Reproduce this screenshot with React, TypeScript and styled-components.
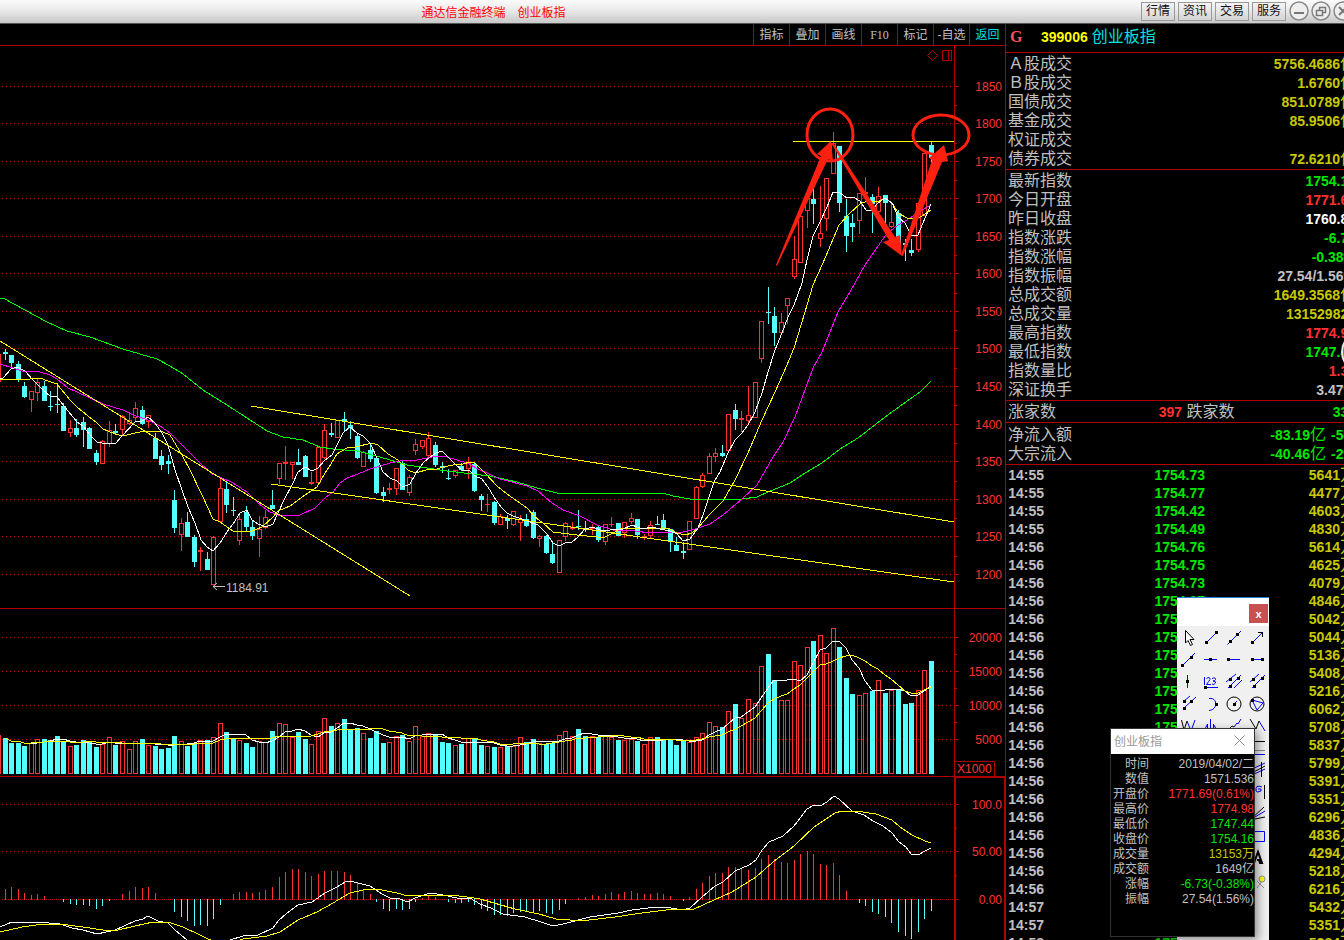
import React from "react";
import styled, { createGlobalStyle } from "styled-components";

const GlobalStyle = createGlobalStyle`
  * { box-sizing: border-box; }
  body {
    margin: 0;
    background: #000;
    overflow: hidden;
    font-family: "Liberation Sans", "Noto Sans CJK SC", sans-serif;
  }
  button { font-family: inherit; padding: 0; margin: 0; }
`;

const UP = "#ff3232";
const DOWN = "#54ffff";
const LINE = "#b00000";
const GREY = "#c0c0c0";
const GREEN = "#00e600";
const GOLD = "#c8c800";
const BLUE = "#0000ff";

/* ---------- shell ---------- */

const Page = styled.div`
  position: relative;
  display: flex;
  flex-direction: column;
  height: 100vh;
  overflow: hidden;
  background: #000;
`;

const TitleBar = styled.header`
  display: flex;
  flex: none;
  align-items: center;
  height: 24px;
  padding-bottom: 1px;
  background: linear-gradient(#fafafa, #ececec 40%, #c8c8c8);
  border-bottom: 1px solid #555;
  overflow: hidden;
`;

const AppTitle = styled.h1`
  flex: 1;
  margin: 0;
  display: flex;
  justify-content: center;
  gap: 12px;
  padding-right: 154px;
  font-size: 12px;
  font-weight: 400;
  color: #ff0000;
`;

const TitleButtons = styled.div`
  display: flex;
  flex: none;
  align-items: center;
  gap: 3px;
  margin-right: -8px;
`;

const TitleButton = styled.button`
  width: 34px;
  height: 19px;
  border: 1px solid #999;
  background: linear-gradient(#f4f4f4, #d4d4d4);
  color: #111;
  font-size: 12px;
  line-height: 16px;
`;

const RoundButton = styled.button`
  display: block;
  width: 19px;
  height: 20px;
  border: 0;
  background: none;
  svg { display: block; }
`;

const Main = styled.main`
  display: flex;
  flex: 1;
  min-height: 0;
`;

const ChartArea = styled.section`
  flex: 1;
  min-width: 0;
`;

const ChartTools = styled.nav`
  display: flex;
  justify-content: flex-end;
  height: 22px;
  border-bottom: 1px solid ${LINE};
`;

const ChartTool = styled.button<{ $active?: boolean; $serif?: boolean }>`
  width: 36px;
  border: 0;
  border-left: 1px solid ${LINE};
  background: none;
  color: ${(p) => (p.$active ? "#00e0e0" : GREY)};
  ${(p) => p.$serif && 'font-family: "Liberation Serif", serif;'}
  font-size: 12px;
  line-height: 20px;
  white-space: nowrap;
`;

const Panel = styled.svg`
  display: block;
  width: 100%;
  height: auto;
`;

/* ---------- chart data: wick top, wick bottom, body top, body bottom, rising ---------- */

type Candle = [number, number, number, number, 0 | 1];

const candles: Candle[] = [
  [349,360,352,354,0],[355,367,355,363,0],[361,382,364,379,0],[382,398,386,397,0],[391,412,391,400,1],
  [379,401,382,393,1],[381,401,386,401,0],[391,411,406,407,0],[383,413,404,405,0],[403,431,406,431,0],
  [420,437,428,433,1],[419,437,428,435,0],[417,447,422,430,0],[427,449,428,449,0],[450,465,453,462,0],
  [440,464,441,464,1],[421,447,430,444,1],[424,434,431,433,0],[415,436,416,430,1],[412,425,420,424,1],
  [402,421,408,418,1],[406,425,410,424,0],[415,428,415,422,1],[433,459,438,459,0],[450,470,456,465,0],
  [455,474,461,464,0],[490,533,500,528,0],[518,551,523,535,1],[512,537,522,537,0],[535,567,537,562,0],
  [547,571,550,552,1],[552,570,559,570,0],[536,585,537,585,1],[478,522,488,522,1],[482,513,489,505,0],
  [497,516,510,511,0],[515,545,519,541,1],[506,532,512,527,0],[520,540,527,536,0],[516,557,529,539,1],
  [510,529,517,528,1],[490,509,505,509,0],[463,484,463,479,1],[446,480,462,464,1],[462,479,462,465,1],
  [449,465,462,465,0],[455,477,456,477,0],[472,485,482,484,1],[447,484,447,483,1],[424,459,430,458,1],
  [423,437,433,435,0],[420,438,420,438,1],[412,432,419,421,0],[421,439,425,428,0],[434,459,436,458,0],
  [451,467,452,467,1],[443,462,450,459,0],[456,494,458,493,0],[487,502,492,496,0],[483,494,488,490,1],
  [468,495,468,489,1],[461,490,463,490,0],[475,496,477,493,1],[439,455,444,451,1],[440,449,440,447,1],
  [432,457,438,456,1],[442,467,445,465,0],[462,473,466,468,0],[469,480,478,479,0],[470,478,470,476,1],
  [463,471,466,470,0],[457,479,463,469,1],[463,492,464,491,0],[494,511,496,500,0],[494,512,504,505,1],
  [501,525,502,523,0],[514,525,516,525,1],[515,529,518,521,0],[511,526,511,525,1],[515,541,519,523,1],
  [514,527,519,526,0],[510,539,512,538,0],[535,547,536,539,1],[535,554,536,553,0],[542,564,554,563,0],
  [540,573,540,573,1],[522,541,523,537,1],[522,530,527,529,1],[510,530,526,527,0],[521,532,528,530,0],
  [524,535,527,529,1],[525,542,527,540,0],[524,545,524,542,1],[517,527,524,525,1],[523,536,523,536,0],
  [522,538,522,533,1],[513,524,518,522,1],[519,539,519,535,0],[534,540,536,537,1],[521,538,525,536,1],
  [516,525,524,525,0],[514,530,520,529,0],[529,552,529,542,0],[537,551,545,551,0],[542,559,551,553,0],
  [521,550,521,550,1],[486,519,487,519,1],[473,488,475,487,1],[453,474,456,474,1],[448,462,453,457,1],
  [445,457,453,456,0],[414,451,414,451,1],[404,430,410,419,0],[411,432,418,420,1],[386,424,415,421,1],
  [382,418,382,418,1],[321,363,321,359,1],[287,324,312,313,0],[307,346,316,333,0],[313,333,322,333,1],
  [298,324,298,306,1],[236,279,259,277,1],[216,263,216,263,1],[190,228,198,211,1],[185,224,199,204,0],
  [186,247,233,239,1],[178,231,178,219,1],[132,174,143,174,1],[146,212,146,203,0],[199,252,216,236,0],
  [214,242,223,227,0],[193,234,193,221,1],[177,196,192,194,1],[194,233,197,204,0],[187,216,196,212,1],
  [195,228,195,203,0],[203,228,222,227,1],[210,245,213,245,0],[239,261,243,245,0],[239,256,250,253,0],
  [203,252,203,250,1],[153,216,153,216,1],[142,163,145,158,0],
];

/* Volume bar tops and MACD bar ends, in thirds of a pixel below y = 600. */
const volumeTops = [
  414,429,429,438,429,417,417,420,408,426,438,435,420,426,441,432,411,435,423,447,423,417,435,438,447,444,408,423,
  438,432,420,420,411,369,396,417,420,429,441,423,426,393,369,372,411,396,417,432,393,354,378,369,357,387,384,399,
  414,393,429,426,408,405,423,378,408,399,405,426,429,435,432,414,414,435,438,441,441,438,438,411,426,417,429,432,
  429,405,393,408,387,408,408,411,408,411,420,420,417,423,432,411,411,417,417,435,423,426,411,399,366,378,381,333,
  312,354,297,309,198,162,240,300,300,183,195,141,123,105,159,84,141,234,282,285,279,273,240,279,270,270,312,309,
  270,210,183,
];

const macd = [
  867,861,867,879,885,882,888,898,896,906,912,915,915,918,927,918,903,896,882,873,861,864,861,879,896,898,936,951,
  963,978,975,978,957,915,898,882,876,876,879,876,870,861,831,816,807,807,816,828,822,813,813,813,816,825,849,867,
  882,906,927,933,927,930,927,906,894,885,891,898,906,909,909,906,915,927,933,945,945,948,939,936,936,936,933,939,
  942,930,912,898,894,891,885,888,882,876,882,876,873,879,882,882,879,882,888,898,903,891,867,849,828,819,819,801,
  801,804,810,804,777,765,777,786,789,780,762,753,762,792,795,789,825,873,898,909,918,936,942,951,969,996,1008,
  1017,996,957,933,
];

const barX = (i: number) => Math.floor(5.12 + 6.521 * i);

const volumeAverage = (span: number) =>
  volumeTops
    .map((_, i) => {
      const part = volumeTops.slice(Math.max(0, i - span + 1), i + 1);
      const mean = part.reduce((a, b) => a + b, 0) / part.length;
      return `${barX(i)},${Math.round(600 + mean / 3)}`;
    })
    .join(" ");

const ma5 =
  "0,379 3,378 11,369 17,367 25,371 33,380 43,390 50,396 57,397 64,406 77,422 83,426 90,435 97,442 102,443 116,443 122,436 135,422 142,421 148,417 155,423 162,433 168,445 175,470 182,490 188,507 195,523 201,540 207,547 213,551 220,543 227,532 233,524 240,513 247,510 252,520 258,524 266,527 273,524 278,513 285,498 292,485 298,472 305,467 312,471 318,468 325,460 332,455 338,443 343,433 350,427 357,433 363,436 370,443 377,458 383,472 390,478 397,481 403,487 410,484 416,473 423,463 430,457 436,453 442,451 449,458 456,465 462,470 469,470 475,476 482,479 488,487 494,497 501,507 507,513 513,516 527,521 538,525 547,534 553,543 559,546 565,543 572,542 578,537 585,529 593,527 600,530 610,530 623,529 632,525 642,529 652,527 660,529 670,531 677,534 683,541 690,539 698,528 703,515 708,500 714,482 720,472 728,453 735,440 742,433 748,425 755,412 762,393 768,372 775,350 782,333 788,317 794,305 802,283 807,260 813,236 820,222 827,207 833,192 839,192 847,198 853,197 860,201 866,210 871,211 878,203 885,198 892,203 898,217 905,223 911,235 918,235 923,223 931,204";
const ma10 =
  "0,379 30,379 40,378 48,381 57,384 70,400 77,407 88,416 97,423 103,429 115,434 123,436 135,433 145,431 163,432 170,435 182,455 190,470 202,495 213,519 220,522 233,531 252,531 262,527 273,517 278,511 290,506 305,495 317,487 325,473 331,464 337,454 347,448 355,447 372,443 378,445 388,454 398,460 408,470 415,473 430,469 437,469 443,467 453,465 463,464 470,462 475,463 485,473 497,486 507,494 517,501 527,508 535,517 543,523 553,532 577,535 597,537 605,537 613,533 620,529 663,528 670,529 677,533 685,535 692,533 698,528 710,514 723,501 735,480 748,453 762,420 775,392 787,365 794,348 802,322 813,285 823,263 839,225 850,213 860,204 867,201 877,202 885,198 893,204 898,213 907,218 915,219 922,216 931,210";
const ma20 =
  "0,364 13,368 22,371 40,372 50,375 57,379 68,388 88,397 103,404 123,410 133,415 148,420 160,426 170,433 187,450 200,463 212,474 220,477 233,483 247,492 258,503 270,512 278,515 300,515 315,508 325,498 333,492 340,483 347,478 358,474 370,469 390,463 400,461 417,460 437,456 447,457 467,463 480,470 500,479 527,486 538,491 552,503 563,510 580,516 597,525 613,530 635,531 650,533 670,532 683,532 695,529 710,524 723,515 742,499 757,485 773,457 783,442 795,417 813,368 822,352 838,312 850,292 865,265 885,236 895,227 910,218 920,211 931,205";
const ma60 =
  "0,298 3,298 25,310 47,322 67,331 90,337 123,349 157,359 170,366 183,374 203,390 227,405 247,418 267,431 283,437 303,440 320,447 333,449 357,451 380,457 407,465 447,471 490,476 517,482 537,488 557,493 580,493 613,493 663,493 673,496 690,499 742,499 757,497 768,492 790,483 802,475 822,463 840,449 858,438 885,417 903,404 920,392 927,385 931,381";
const dif =
  "0,927 12,922 25,923 38,922 60,924 72,928 83,930 97,934 115,930 135,921 143,919 148,916 158,921 168,923 175,930 187,940 205,948 220,945 230,940 243,936 258,935 273,928 278,921 287,913 298,905 312,902 325,893 337,887 345,882 350,881 370,886 382,894 390,898 397,898 408,902 415,898 430,893 443,895 457,898 470,898 480,904 491,908 503,914 525,917 541,922 553,926 563,924 590,917 618,913 632,910 656,907 671,908 682,910 690,908 701,898 715,886 723,882 735,871 749,865 756,860 762,850 769,842 783,836 794,826 807,809 814,805 820,806 827,802 834,796 839,799 852,811 864,815 873,821 883,826 892,833 899,842 906,847 911,854 918,855 925,851 931,848";
const dea =
  "0,932 22,927 43,924 60,924 83,927 103,930 118,930 135,926 153,922 168,922 183,927 200,935 208,939 225,945 243,939 267,936 280,932 298,920 317,912 333,903 350,893 363,890 377,889 397,893 408,896 430,895 450,895 467,897 480,899 494,903 515,909 539,914 556,919 570,920 589,920 615,917 642,913 666,910 694,909 714,900 732,892 756,877 773,862 794,846 814,827 835,813 842,811 856,811 876,814 892,820 900,827 912,835 925,841 931,843";

const Curve = ({ points, color }: { points: string; color: string }) => (
  <polyline points={points} fill="none" stroke={color} strokeWidth={1} shapeRendering="crispEdges" />
);

const Bar = ({ x, top, bottom, rising }: { x: number; top: number; bottom: number; rising: boolean }) =>
  rising && bottom - top > 2 ? (
    <rect x={x - 1.5} y={top + 0.5} width={4} height={bottom - top - 1} fill="none" stroke={UP} />
  ) : (
    <rect x={x - 2} y={top} width={5} height={bottom - top} fill={rising ? UP : DOWN} />
  );

const GridRow = ({ y, label, dense }: { y: number; label: string; dense?: boolean }) => (
  <g>
    <line x1={2} x2={954} y1={y + 0.5} y2={y + 0.5} stroke={LINE} strokeDasharray={dense ? "1 1" : "1 3"} />
    <rect x={954} y={y} width={5} height={1} fill={LINE} />
    <text x={1002} y={y + 5} textAnchor="end" fontSize={12} fill={UP}>
      {label}
    </text>
  </g>
);

const MinorTick = ({ y }: { y: number }) => <rect x={954} y={y} width={3} height={1} fill={LINE} />;

const PricePanel = () => (
  <Panel viewBox="0 46 1005 562" role="img" aria-label="创业板指 K线">
    <g shapeRendering="crispEdges">
      {Array.from({ length: 14 }, (_, k) => (
        <GridRow key={k} y={Math.floor(86 + 37.56 * k)} label={String(1850 - 50 * k)} />
      ))}
      {Array.from({ length: 13 }, (_, k) => (
        <MinorTick key={k} y={Math.round(105 + 37.56 * k)} />
      ))}
      <rect x={954} y={46} width={1} height={562} fill={LINE} />
      <rect x={-2} y={354} width={3} height={28} fill={UP} />
      {candles.map(([high, low, top, bottom, rising], i) => (
        <g key={i}>
          <rect x={barX(i)} y={high} width={1} height={top - high} fill={rising ? UP : DOWN} />
          <rect x={barX(i)} y={bottom} width={1} height={low - bottom} fill={rising ? UP : DOWN} />
          <Bar x={barX(i)} top={top} bottom={bottom} rising={rising === 1} />
        </g>
      ))}
    </g>
    <Curve points={ma60} color="#00ff00" />
    <Curve points={ma20} color="#ff00ff" />
    <Curve points={ma10} color="#ffff00" />
    <Curve points={ma5} color="#ffffff" />
    <Curve points="0,341 410,596" color="#ffff00" />
    <Curve points="251,406 954,522" color="#ffff00" />
    <Curve points="271,484 954,582" color="#ffff00" />
    <rect x={793} y={141} width={161} height={1} fill="#ffff00" />
    <path d="M225 586.5H213M217 583L213 586.5L217 590" fill="none" stroke={GREY} />
    <text x={226} y={592} fontSize={12} fill={GREY}>
      1184.91
    </text>
    <path d="M932.5 50.5L937.5 55.5L932.5 60.5L927.5 55.5Z" fill="none" stroke={LINE} />
    <path d="M942.5 50.5H951.5V60.5H942.5ZM948.5 50.5V60.5" fill="none" stroke={LINE} />
    <g fill="#ff2010">
      <path d="M776 265L821 156L817 154L831 141L833 161L828 159L777 266Z" />
      <path d="M831 143L834 144L895 237L900 235L902 256L883 242L889 240Z" />
      <path d="M901 255L932 160L929 158L944 145L948 161L942 162L903 256Z" />
    </g>
    <g fill="none" stroke="#ff2010" strokeWidth={3}>
      <ellipse cx={830} cy={135} rx={23} ry={26} />
      <ellipse cx={941} cy={135} rx={28} ry={20} />
    </g>
  </Panel>
);

const VolumePanel = () => (
  <Panel viewBox="0 608 1005 168" role="img" aria-label="成交量">
    <g shapeRendering="crispEdges">
      <rect x={0} y={608} width={1005} height={1} fill={LINE} />
      {[20000, 15000, 10000, 5000].map((v, k) => (
        <GridRow key={v} y={637 + 34 * k} label={String(v)} />
      ))}
      {[654, 688, 722].map((y) => (
        <MinorTick key={y} y={y} />
      ))}
      <rect x={954} y={608} width={1} height={168} fill={LINE} />
      <rect x={0} y={735} width={1} height={39} fill={UP} />
      {volumeTops.map((t, i) => (
        <Bar key={i} x={barX(i)} top={600 + Math.round(t / 3)} bottom={774} rising={candles[i][4] === 1} />
      ))}
      <path d="M955 761.5H994.5V776" fill="none" stroke={LINE} />
    </g>
    <Curve points={volumeAverage(5)} color="#ffffff" />
    <Curve points={volumeAverage(10)} color="#ffff00" />
    <text x={957} y={773} fontSize={12} fill={UP}>
      X1000
    </text>
  </Panel>
);

const MacdPanel = () => (
  <Panel viewBox="0 776 1005 166" role="img" aria-label="MACD">
    <g shapeRendering="crispEdges">
      <rect x={0} y={776} width={1005} height={1} fill={LINE} />
      <GridRow y={804} label="100.0" />
      <GridRow y={851} label="50.00" />
      <GridRow y={899} label="0.00" dense />
      <MinorTick y={828} />
      <MinorTick y={875} />
      <path d="M955 942V777H1005" fill="none" stroke={LINE} strokeWidth={2} />
      <rect x={1004} y={777} width={1} height={165} fill={LINE} />
      {macd.map((t, i) => {
        const y = 600 + Math.round(t / 3);
        return y < 899 ? (
          <rect key={i} x={barX(i)} y={y} width={1} height={900 - y} fill={UP} />
        ) : (
          y > 900 && <rect key={i} x={barX(i)} y={899} width={1} height={y - 899} fill={DOWN} />
        );
      })}
    </g>
    <Curve points={dif} color="#ffffff" />
    <Curve points={dea} color="#ffff00" />
  </Panel>
);

/* ---------- quote column ---------- */

const Side = styled.aside`
  flex: none;
  width: 339px;
  overflow: hidden;
  border-left: 1px solid ${LINE};
`;

const SideInner = styled.div`
  width: 350px;
`;

const SymbolRow = styled.h2`
  display: flex;
  align-items: center;
  height: 28px;
  margin: 0;
  padding: 0 0 2px 4px;
  font-size: 14px;
  line-height: 24px;
  color: #ffff00;
`;

const Flag = styled.span`
  width: 31px;
  font-family: "Liberation Serif", serif;
  font-size: 16px;
  color: #ff5050;
`;

const SymbolName = styled.span`
  margin-left: 4px;
  font-size: 16px;
  font-weight: 400;
  color: #00e0e0;
`;

const Block = styled.div<{ $top?: number }>`
  border-top: 1px solid ${LINE};
  padding: ${(p) => p.$top ?? 1}px 0 1px 2px;
`;

const Table = styled.table<{ $row: number }>`
  width: 100%;
  table-layout: fixed;
  border-collapse: collapse;
  th, td {
    height: ${(p) => p.$row}px;
    padding: 0;
    line-height: ${(p) => p.$row - 1}px;
    white-space: nowrap;
    overflow: visible;
  }
`;

const Label = styled.th`
  color: ${GREY};
  font-size: 16px;
  font-weight: 400;
  text-align: left;
`;

const Value = styled.td<{ $color: string; $w?: number }>`
  width: ${(p) => (p.$w ? `${p.$w}px` : "auto")};
  color: ${(p) => p.$color};
  font-size: 14px;
  font-weight: 700;
  text-align: right;
`;

const Unit = styled.span`
  font-size: 16px;
  font-weight: 400;
  line-height: 0;
`;

const Num = ({ text }: { text: string }) => {
  const unit = /[亿万]$/.test(text) ? text.slice(-1) : "";
  return (
    <>
      {unit ? text.slice(0, -1) : text}
      {unit && <Unit>{unit}</Unit>}
    </>
  );
};

const turnover: [string, string, string][] = [
  ["Ａ股成交", "5756.4686亿", GOLD],
  ["Ｂ股成交", "1.6760亿", GOLD],
  ["国债成交", "851.0789亿", GOLD],
  ["基金成交", "85.9506亿", GOLD],
  ["权证成交", "", GOLD],
  ["债券成交", "72.6210亿", GOLD],
];

const quotes: [string, string, string][] = [
  ["最新指数", "1754.16", GREEN],
  ["今日开盘", "1771.69", UP],
  ["昨日收盘", "1760.89", "#ffffff"],
  ["指数涨跌", "-6.73", GREEN],
  ["指数涨幅", "-0.38%", GREEN],
  ["指数振幅", "27.54/1.56%", GREY],
  ["总成交额", "1649.3568亿", GOLD],
  ["总成交量", "131529824", GOLD],
  ["最高指数", "1774.98", UP],
  ["最低指数", "1747.44", GREEN],
  ["指数量比", "1.31", UP],
  ["深证换手", "3.47%", GREY],
];

const ticks: [string, string, string][] = [
  ["14:55", "1754.73", "5641"], ["14:55", "1754.77", "4477"], ["14:55", "1754.42", "4603"],
  ["14:55", "1754.49", "4830"], ["14:56", "1754.76", "5614"], ["14:56", "1754.75", "4625"],
  ["14:56", "1754.73", "4079"], ["14:56", "1754.37", "4846"], ["14:56", "1754.31", "5042"],
  ["14:56", "1754.28", "5044"], ["14:56", "1754.40", "5136"], ["14:56", "1754.22", "5408"],
  ["14:56", "1754.19", "5216"], ["14:56", "1754.35", "6062"], ["14:56", "1754.12", "5708"],
  ["14:56", "1754.08", "5837"], ["14:56", "1754.21", "5799"], ["14:56", "1754.30", "5391"],
  ["14:56", "1754.26", "5351"], ["14:56", "1754.18", "6296"], ["14:56", "1754.11", "4836"],
  ["14:56", "1754.05", "4294"], ["14:56", "1754.14", "5218"], ["14:56", "1754.20", "6216"],
  ["14:57", "1754.16", "5432"], ["14:57", "1754.16", "5351"], ["14:58", "1754.16", "5284"],
];

const QuoteRows = ({ rows }: { rows: [string, string, string][] }) => (
  <Table $row={19}>
    <tbody>
      {rows.map(([label, value, color]) => (
        <tr key={label}>
          <Label scope="row">{label}</Label>
          <Value $color={color}>
            <Num text={value} />
          </Value>
        </tr>
      ))}
    </tbody>
  </Table>
);

/* ---------- drawing toolbox ---------- */

const Toolbox = styled.section`
  position: absolute;
  top: 597px;
  right: 75px;
  bottom: 0;
  width: 92px;
  overflow: hidden;
  border-top: 1px solid #1a82d8;
  background: #f0f0f0;
`;

const ToolboxTitle = styled.div`
  display: flex;
  justify-content: flex-end;
  height: 28px;
  padding: 6px 1px 0 0;
  background: #fff;
`;

const CloseBox = styled.button`
  width: 19px;
  height: 19px;
  border: 0;
  background: #c75050;
  color: #fff;
  font-size: 11px;
  font-weight: 700;
  line-height: 18px;
`;

const ToolGrid = styled.div`
  display: grid;
  grid-template-columns: repeat(4, 23px);
  grid-auto-rows: 22px;
`;

const ToolButton = styled.button<{ $edge?: boolean }>`
  ${(p) => p.$edge && "grid-column: 4;"}
  border: 0;
  background: none;
  svg { display: block; }
`;

const Dot = ({ x, y }: { x: number; y: number }) => <rect x={x - 1} y={y - 1} width={3} height={3} fill="#000" />;
const Stroke = ({ d, c = BLUE }: { d: string; c?: string }) => <path d={d} fill="none" stroke={c} />;

const tools: [string, React.ReactNode][] = [
  ["选择", <path d="M8.5 4.5V17L11 14.5L13.5 19.5L15.5 18.5L13 13.5H17Z" fill="#fff" stroke="#000" />],
  ["线段", <><Stroke d="M6.5 16.5L17 6" /><Dot x={6} y={16} /><Dot x={16} y={6} /></>],
  ["直线", <><Stroke d="M4.5 18.5L18 5" /><Dot x={7} y={15} /><Dot x={14} y={8} /></>],
  ["箭头", <><Stroke d="M6.5 16.5L17 6" /><Stroke d="M12 6.5H16.5V11" c="#000" /><Dot x={6} y={16} /></>],
  ["射线", <><Stroke d="M5 18L18 5" /><Dot x={5} y={17} /><Dot x={14} y={9} /></>],
  ["水平线", <><Stroke d="M4 11.5H17" /><Dot x={10} y={11} /></>],
  ["水平射线", <><Stroke d="M5 11.5H17" /><Dot x={5} y={11} /></>],
  ["水平线段", <><Stroke d="M6 11.5H17" /><Dot x={6} y={11} /><Dot x={16} y={11} /></>],
  ["垂直线", <><Stroke d="M10.5 5V18" /><Dot x={10} y={11} /></>],
  ["价格标注", <><Stroke d="M4.5 7V15M5 17.5H18M6.5 8.5Q10 6 10 9.5Q9 11 6.5 14.5H11M12 8.5Q16 7 15.5 9.5Q15 11 13 11Q16 11 15.5 13Q14 15.5 12 14" /><Dot x={5} y={17} /></>],
  ["平行线", <><Stroke d="M3 12L13 4M5 18L18 5M11 18L19 10" /><Dot x={7} y={9} /><Dot x={7} y={16} /><Dot x={15} y={8} /></>],
  ["通道", <><Stroke d="M4 12L13 4M6 18L19 5" /><Dot x={7} y={9} /><Dot x={8} y={16} /><Dot x={16} y={8} /></>],
  ["平行射线", <><Stroke d="M7 9L13 4M7 16L19 5" /><Dot x={7} y={9} /><Dot x={7} y={16} /><Dot x={14} y={9} /></>],
  ["圆弧", <><Stroke d="M9 6.5C18 5 18 18 9 18.5" /><Dot x={16} y={12} /></>],
  ["圆", <><circle cx={11} cy={12} r={7} fill="none" stroke="#000" /><Stroke d="M11 12L14 9" /><Dot x={11} y={12} /></>],
  ["外接圆", <><circle cx={11} cy={12} r={7} fill="none" stroke="#000" /><Stroke d="M6 8L17 11L11 18Z" /><Dot x={6} y={8} /></>],
  ["波浪", <><Stroke d="M4.5 6L7 16L10 7" c="#000" /><Stroke d="M10 7L14 17L18 6" /></>],
  ["周期线", <Stroke d="M4 17L7.5 10V17M10.5 5V17M13.5 10V17M14 11L17 17" />],
  ["趋势", <><Stroke d="M4 17L9 12L11 13" c="#000" /><Stroke d="M11 13L14 9L15 10L18 5" /></>],
  ["折线", <><Stroke d="M4 5L10 15L13 7" c="#000" /><Stroke d="M13 7L19 17" /></>],
  ["黄金分割", <><Stroke d="M4 5.5H19" c="#000" /><Stroke d="M4 14.5H19" c="#888" /><Stroke d="M4 18.5H19" /></>],
  ["甘氏线", <><Stroke d="M4 12L19 5M4 18L19 11" /><Stroke d="M4 16L19 8M15.5 4V19" c="#000" /></>],
  ["标记", <><Stroke d="M16 7Q9 4 10 11Q11 13 15 11V9H12" /><Stroke d="M18.5 5V19" c="#000" /></>],
  ["扇形线", <><Stroke d="M4 18L18 5M4 18L19 15" c="#000" /><Stroke d="M4 18L19 9" /></>],
  ["矩形", <Stroke d="M4.5 7.5H18.5V17.5H4.5Z" />],
  ["文字", <path d="M8 17L12 6L16 17H14L13 14H11" fill="none" stroke="#000" strokeWidth={2} />],
  ["删除", <><Stroke d="M11 13L18 20M16 13L11 20" c="#999" /><circle cx={16} cy={11} r={3} fill="#ff0" stroke="#999" /></>],
];

/* ---------- data window ---------- */

const DataWindow = styled.section`
  position: absolute;
  top: 728px;
  right: 89px;
  width: 145px;
  height: 209px;
  border: 1px solid #333;
  background: #000;
  box-shadow: 3px 3px 9px rgba(0, 0, 0, 0.4);
`;

const DataTitle = styled.header`
  display: flex;
  align-items: center;
  justify-content: space-between;
  height: 25px;
  margin-bottom: 2px;
  padding: 0 8px 2px 3px;
  background: #fff;
  color: #999;
  font-size: 12px;
`;

const DataClose = styled.button`
  width: 13px;
  height: 13px;
  border: 0;
  background: none;
  svg { display: block; }
`;

const DataLabel = styled.th`
  width: 38px;
  color: ${GREY};
  font-size: 12px;
  font-weight: 400;
  text-align: right;
`;

const DataValue = styled.td<{ $color: string }>`
  color: ${(p) => p.$color};
  font-size: 12px;
  text-align: right;
`;

const dataRows: [string, string, string][] = [
  ["时间", "2019/04/02/二", GREY],
  ["数值", "1571.536", GREY],
  ["开盘价", "1771.69(0.61%)", UP],
  ["最高价", "1774.98", UP],
  ["最低价", "1747.44", GREEN],
  ["收盘价", "1754.16", GREEN],
  ["成交量", "13153万", GOLD],
  ["成交额", "1649亿", GREY],
  ["涨幅", "-6.73(-0.38%)", GREEN],
  ["振幅", "27.54(1.56%)", GREY],
];

const FloatBall = styled.button`
  position: absolute;
  top: 331px;
  right: -39px;
  width: 42px;
  height: 42px;
  border: 2px solid #e8e8e8;
  border-radius: 50%;
  background: #2a9a78;
`;

export default function App() {
  return (
    <Page>
      <GlobalStyle />
      <TitleBar>
        <AppTitle>
          <span>通达信金融终端</span>
          <span>创业板指</span>
        </AppTitle>
        <TitleButtons>
          {["行情", "资讯", "交易", "服务"].map((t) => (
            <TitleButton key={t}>{t}</TitleButton>
          ))}
          {["M5 12H15", "M5.5 9.5H11.5V14.5H5.5ZM8.5 9V6.5H14.5V11.5H12", "M6 6L14 14M14 6L6 14"].map((d, i) => (
            <RoundButton key={d} aria-label={["最小化", "还原", "关闭"][i]}>
              <svg width={20} height={20}>
                <circle cx={10} cy={10} r={9} fill="#eee" stroke="#8a8a8a" strokeWidth={1.5} />
                <path d={d} fill="none" stroke="#777" strokeWidth={i === 1 ? 1.5 : 2} />
              </svg>
            </RoundButton>
          ))}
        </TitleButtons>
      </TitleBar>
      <Main>
        <ChartArea>
          <ChartTools>
            {["指标", "叠加", "画线", "F10", "标记", "-自选", "返回"].map((t) => (
              <ChartTool key={t} $active={t === "返回"} $serif={t === "F10"}>
                {t}
              </ChartTool>
            ))}
          </ChartTools>
          <PricePanel />
          <VolumePanel />
          <MacdPanel />
        </ChartArea>
        <Side>
          <SideInner>
            <SymbolRow>
              <Flag>G</Flag>399006<SymbolName>创业板指</SymbolName>
            </SymbolRow>
            <Block>
              <QuoteRows rows={turnover} />
            </Block>
            <Block>
              <QuoteRows rows={quotes} />
            </Block>
            <Block>
              <Table $row={19}>
                <tbody>
                  <tr>
                    <Label scope="row">涨家数</Label>
                    <Value $color={UP}>397</Value>
                    <Label scope="row">&nbsp;跌家数</Label>
                    <Value $color={GREEN}>338</Value>
                  </tr>
                </tbody>
              </Table>
            </Block>
            <Block $top={2}>
              <Table $row={19}>
                <tbody>
                  <tr>
                    <Label scope="row">净流入额</Label>
                    <Value $color={GREEN}><Num text="-83.19亿" /></Value>
                    <Value $color={GREEN} $w={30}>-5%</Value>
                  </tr>
                  <tr>
                    <Label scope="row">大宗流入</Label>
                    <Value $color={GREEN}><Num text="-40.46亿" /></Value>
                    <Value $color={GREEN} $w={30}>-2%</Value>
                  </tr>
                </tbody>
              </Table>
            </Block>
            <Block>
              <Table $row={18}>
                <tbody>
                  {ticks.map(([time, price, amount], i) => (
                    <tr key={i}>
                      <Value $color={GREY} $w={36}>{time}</Value>
                      <Value $color={GREEN} $w={161}>{price}</Value>
                      <Value $color={GOLD}><Num text={`${amount}万`} /></Value>
                    </tr>
                  ))}
                </tbody>
              </Table>
            </Block>
          </SideInner>
        </Side>
      </Main>
      <FloatBall aria-label="悬浮球" />
      <Toolbox>
        <ToolboxTitle>
          <CloseBox aria-label="关闭画线工具">x</CloseBox>
        </ToolboxTitle>
        <ToolGrid>
          {tools.map(([name, icon], i) => (
            <ToolButton key={name} aria-label={name} $edge={i >= 20}>
              <svg width={23} height={22}>{icon}</svg>
            </ToolButton>
          ))}
        </ToolGrid>
      </Toolbox>
      <DataWindow>
        <DataTitle>
          创业板指
          <DataClose aria-label="关闭">
            <svg width={13} height={13}>
              <path d="M1.5 1.5L11.5 11.5M11.5 1.5L1.5 11.5" stroke="#888" fill="none" />
            </svg>
          </DataClose>
        </DataTitle>
        <Table $row={15}>
          <tbody>
            {dataRows.map(([label, value, color]) => (
              <tr key={label}>
                <DataLabel scope="row">{label}</DataLabel>
                <DataValue $color={color}>{value}</DataValue>
              </tr>
            ))}
          </tbody>
        </Table>
      </DataWindow>
    </Page>
  );
}
